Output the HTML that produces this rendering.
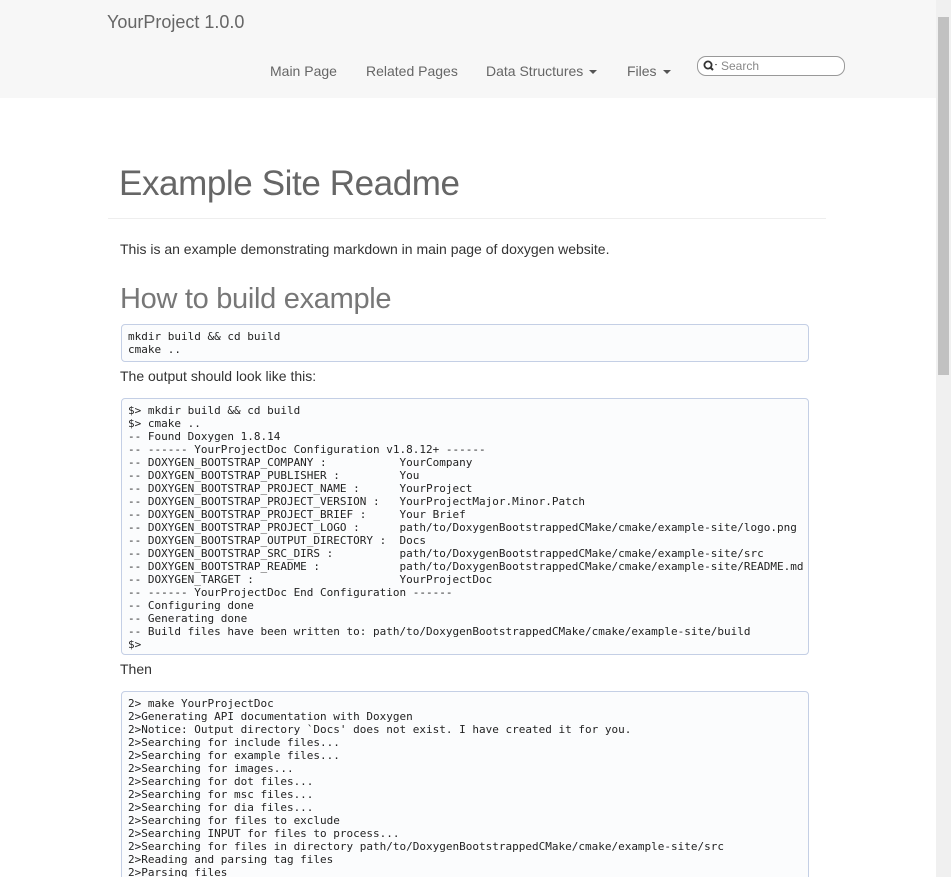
<!DOCTYPE html>
<html><head><meta charset="utf-8"><style>
html,body{margin:0;padding:0;width:951px;height:877px;overflow:hidden;}
body{background:#fff;font-family:"Liberation Sans",sans-serif;position:relative;}
.nav{position:absolute;left:0;top:0;width:936px;height:98px;background:#f7f7f7;}
.brand{position:absolute;left:107px;top:12px;font-size:18px;color:#666;}
.links{position:absolute;top:63px;font-size:14px;color:#666;}
.links span{position:absolute;white-space:nowrap;}
.caret{display:inline-block;width:0;height:0;border-left:4px solid transparent;border-right:4px solid transparent;border-top:4px solid #555;vertical-align:middle;margin-left:6px;}
.search{position:absolute;left:697px;top:56px;width:146px;height:18px;border:1px solid #999;border-radius:9px;background:#fff;font-size:12px;color:#888;}
h1{position:absolute;left:119px;top:164px;margin:0;font-weight:normal;font-size:35px;color:#666;letter-spacing:-0.4px;}
.hr{position:absolute;left:108px;top:218px;width:718px;height:1px;background:#eee;}
p{position:absolute;left:120px;margin:0;font-size:14px;color:#333;}
h2{position:absolute;left:120px;top:283px;margin:0;font-size:29px;font-weight:normal;color:#777;letter-spacing:-0.3px;}
pre{position:absolute;left:121px;width:674px;margin:0;padding:5px 6px;background:#fbfcfd;border:1px solid #c4cfe5;border-radius:4px;font-family:"DejaVu Sans Mono",monospace;font-size:11px;line-height:13px;color:#222;overflow:hidden;}
.sb{position:absolute;left:936px;top:0;width:15px;height:877px;background:#f0f0f0;}
.thumb{position:absolute;left:938px;top:17px;width:11px;height:358px;background:#c1c1c1;}
</style></head><body>
<div class="nav">
<div class="brand">YourProject 1.0.0</div>
<div class="links">
<span style="left:270px">Main Page</span>
<span style="left:366px">Related Pages</span>
<span style="left:486px">Data Structures<i class="caret"></i></span>
<span style="left:627px">Files<i class="caret"></i></span>
</div>
<div class="search"><svg width="18" height="14" style="position:absolute;left:4px;top:2px"><circle cx="6" cy="6" r="3.6" fill="none" stroke="#333" stroke-width="1.8"/><line x1="8.5" y1="8.5" x2="11" y2="11" stroke="#333" stroke-width="2"/><path d="M13 5l2 0-1 1.5z" fill="#333"/></svg><span style="position:absolute;left:23px;top:2px">Search</span></div>
</div>
<h1>Example Site Readme</h1>
<div class="hr"></div>
<p style="top:241px">This is an example demonstrating markdown in main page of doxygen website.</p>
<h2>How to build example</h2>
<pre style="top:324px;height:26px">mkdir build &amp;&amp; cd build
cmake ..</pre>
<p style="top:368px">The output should look like this:</p>
<pre style="top:398px;height:245px">$&gt; mkdir build &amp;&amp; cd build
$&gt; cmake ..
-- Found Doxygen 1.8.14
-- ------ YourProjectDoc Configuration v1.8.12+ ------
-- DOXYGEN_BOOTSTRAP_COMPANY :           YourCompany
-- DOXYGEN_BOOTSTRAP_PUBLISHER :         You
-- DOXYGEN_BOOTSTRAP_PROJECT_NAME :      YourProject
-- DOXYGEN_BOOTSTRAP_PROJECT_VERSION :   YourProjectMajor.Minor.Patch
-- DOXYGEN_BOOTSTRAP_PROJECT_BRIEF :     Your Brief
-- DOXYGEN_BOOTSTRAP_PROJECT_LOGO :      path/to/DoxygenBootstrappedCMake/cmake/example-site/logo.png
-- DOXYGEN_BOOTSTRAP_OUTPUT_DIRECTORY :  Docs
-- DOXYGEN_BOOTSTRAP_SRC_DIRS :          path/to/DoxygenBootstrappedCMake/cmake/example-site/src
-- DOXYGEN_BOOTSTRAP_README :            path/to/DoxygenBootstrappedCMake/cmake/example-site/README.md
-- DOXYGEN_TARGET :                      YourProjectDoc
-- ------ YourProjectDoc End Configuration ------
-- Configuring done
-- Generating done
-- Build files have been written to: path/to/DoxygenBootstrappedCMake/cmake/example-site/build
$&gt;</pre>
<p style="top:661px">Then</p>
<pre style="top:691px;height:200px">2&gt; make YourProjectDoc
2&gt;Generating API documentation with Doxygen
2&gt;Notice: Output directory `Docs' does not exist. I have created it for you.
2&gt;Searching for include files...
2&gt;Searching for example files...
2&gt;Searching for images...
2&gt;Searching for dot files...
2&gt;Searching for msc files...
2&gt;Searching for dia files...
2&gt;Searching for files to exclude
2&gt;Searching INPUT for files to process...
2&gt;Searching for files in directory path/to/DoxygenBootstrappedCMake/cmake/example-site/src
2&gt;Reading and parsing tag files
2&gt;Parsing files</pre>
<div class="sb"></div><div class="thumb"></div>
</body></html>
